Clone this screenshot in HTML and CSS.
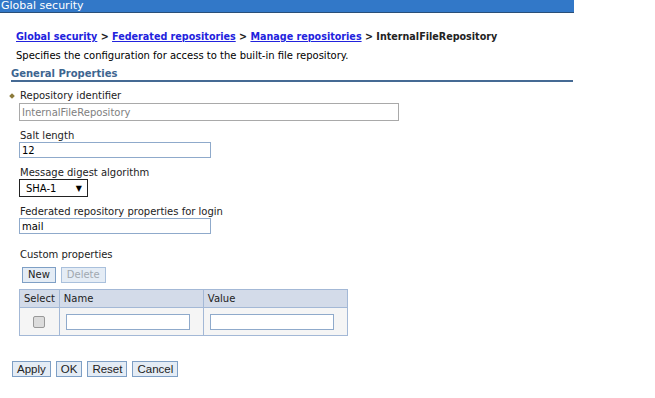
FILE: index.html
```html
<!DOCTYPE html>
<html lang="en">
<head>
    <meta charset="UTF-8">
    <meta name="viewport" content="width=device-width, initial-scale=1.0">
    <title>Global security</title>
    <link rel="stylesheet" href="styles.css">
</head>
<body>
    <div class="title-bar">Global security</div>
    <div class="page">
        <div class="crumbs">
            <a href="#">Global security</a> &gt;
            <a href="#">Federated repositories</a> &gt;
            <a href="#">Manage repositories</a> &gt;
            <span>InternalFileRepository</span>
        </div>
        <p class="desc">Specifies the configuration for access to the built-in file repository.</p>
        <div class="section-title">General Properties</div>

        <div class="form">
            <div class="field">
                <label class="required"><span class="mark"></span>Repository identifier</label>
                <input type="text" class="wide" value="InternalFileRepository" disabled>
            </div>
            <div class="field">
                <label>Salt length</label>
                <input type="text" class="mid" value="12">
            </div>
            <div class="field">
                <label>Message digest algorithm</label>
                <div class="select">SHA-1<span class="arrow">&#9660;</span></div>
            </div>
            <div class="field">
                <label>Federated repository properties for login</label>
                <input type="text" class="mid" value="mail">
            </div>
            <div class="field custom">
                <label>Custom properties</label>
                <div class="tools">
                    <button class="small">New</button>
                    <button class="small" disabled>Delete</button>
                </div>
                <table class="props">
                    <tr>
                        <th class="col-sel">Select</th>
                        <th class="col-name">Name</th>
                        <th>Value</th>
                    </tr>
                    <tr>
                        <td class="center"><span class="check"></span></td>
                        <td><input type="text" class="cell"></td>
                        <td><input type="text" class="cell"></td>
                    </tr>
                </table>
            </div>
        </div>

        <div class="actions">
            <button>Apply</button>
            <button>OK</button>
            <button>Reset</button>
            <button>Cancel</button>
        </div>
    </div>
</body>
</html>
```

FILE: styles.css
```css
body {
    margin: 0;
    background: #ffffff;
    font-family: "DejaVu Sans", Verdana, sans-serif;
    font-size: 10px;
    color: #000000;
}
.title-bar {
    width: 573px;
    height: 12px;
    background-color: #3278c8;
    border-bottom: 1px solid #2a4f78;
    color: #ffffff;
    font-size: 11px;
    line-height: 12px;
    padding-left: 1px;
}
.page {
    padding: 18px 0 0 0;
}
.crumbs {
    margin-left: 16px;
    font-weight: bold;
    font-size: 9.6px;
    color: #222222;
}
.crumbs a {
    color: #2222dd;
}
.desc {
    margin: 8px 0 0 16px;
}
.section-title {
    margin: 7px 0 0 11px;
    width: 562px;
    font-weight: bold;
    color: #3d6590;
    border-bottom: 2px solid #456a94;
    padding-bottom: 1px;
}
.form {
    padding-left: 19px;
    margin-top: 7px;
}
.field {
    margin-bottom: 8px;
}
.field label {
    display: block;
    margin-left: 1px;
    padding-top: 1px;
    line-height: 12px;
    color: #222222;
    position: relative;
}
.field label .mark {
    position: absolute;
    left: -10px;
    top: 5px;
    width: 4px;
    height: 4px;
    background: #8c7a3a;
    transform: rotate(45deg);
}
input {
    font-family: "DejaVu Sans", Verdana, sans-serif;
    font-size: 10px;
    border: 1px solid #8faacb;
    padding: 1px 2px;
    height: 12px;
    box-sizing: content-box;
    margin: 0;
    display: block;
}
input.wide {
    width: 374px;
    height: 14px;
    margin-top: 1px;
    border-color: #a9a9a9;
    background: #ffffff;
    color: #808080;
}
input.mid {
    width: 186px;
}
.select {
    display: flex;
    align-items: center;
    justify-content: space-between;
    width: 56px;
    height: 16px;
    border: 1px solid #222222;
    padding: 0 5px 0 6px;
}
.select .arrow {
    font-size: 8px;
}
.custom label {
    margin-top: 14px;
}
.tools {
    display: flex;
    gap: 5px;
    margin: 6px 0 0 3px;
}
button {
    font-family: "Liberation Sans", Arial, sans-serif;
    font-size: 11.5px;
    line-height: 12px;
    background: #e4ecf5;
    border: 1px solid #7e9fc5;
    color: #222222;
    padding: 1px 4px;
    margin: 0;
}
button.small {
    font-family: "DejaVu Sans", Verdana, sans-serif;
    font-size: 10px;
    line-height: 14px;
    padding: 0 5px;
}
button:disabled {
    color: #a0a8b0;
    border-color: #a9c0dc;
}
.props {
    margin-top: 6px;
    border-collapse: collapse;
    width: 329px;
}
.props th,
.props td {
    border: 1px solid #a3b8d6;
    padding: 0 4px;
}
.props th {
    background: #d3dbe9;
    text-align: left;
    font-weight: normal;
    height: 17px;
    color: #222222;
}
.props td {
    background: #f5f5f5;
    height: 27px;
}
.props .col-sel {
    width: 27px;
}
.props .col-name {
    width: 135px;
}
.props .center {
    text-align: center;
}
.check {
    display: inline-block;
    width: 10px;
    height: 10px;
    border: 1px solid #999999;
    border-radius: 2px;
    background: #dcdcdc;
    vertical-align: middle;
}
input.cell {
    width: 118px;
    height: 12px;
    margin-left: 2px;
}
.actions {
    display: flex;
    gap: 5px;
    margin: 25px 0 0 12px;
}
```
